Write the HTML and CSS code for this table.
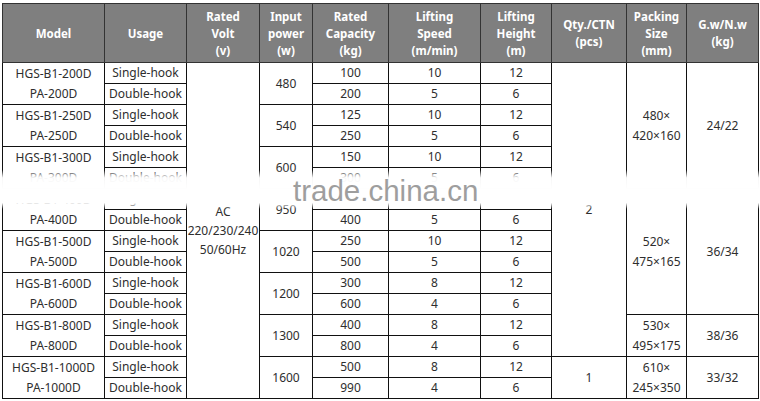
FILE: index.html
```html
<!DOCTYPE html>
<html>
<head>
<meta charset="utf-8">
<link rel="stylesheet" href="styles.css">
</head>
<body>
<div class="sheet">
<table class="spec">
<colgroup>
<col class="c-model"><col class="c-usage"><col class="c-volt"><col class="c-power"><col class="c-cap"><col class="c-speed"><col class="c-height"><col class="c-qty"><col class="c-pack"><col class="c-gw">
</colgroup>
<thead>
<tr class="head">
<th>Model</th><th>Usage</th><th>Rated<br>Volt<br>(v)</th><th>Input<br>power<br>(w)</th><th>Rated<br>Capacity<br>(kg)</th><th>Lifting<br>Speed<br>(m/min)</th><th>Lifting<br>Height<br>(m)</th><th>Qty./CTN<br>(pcs)</th><th>Packing<br>Size<br>(mm)</th><th>G.w/N.w<br>(kg)</th>
</tr>
</thead>
<tbody>
<tr><td rowspan="2" class="model">HGS-B1-200D<br>PA-200D</td><td>Single-hook</td><td rowspan="16" class="volt">AC<br>220/230/240<br>50/60Hz</td><td rowspan="2">480</td><td>100</td><td>10</td><td>12</td><td rowspan="14">2</td><td rowspan="6" class="pack">480×<br>420×160</td><td rowspan="6">24/22</td></tr>
<tr><td>Double-hook</td><td>200</td><td>5</td><td>6</td></tr>
<tr><td rowspan="2" class="model">HGS-B1-250D<br>PA-250D</td><td>Single-hook</td><td rowspan="2">540</td><td>125</td><td>10</td><td>12</td></tr>
<tr><td>Double-hook</td><td>250</td><td>5</td><td>6</td></tr>
<tr><td rowspan="2" class="model">HGS-B1-300D<br>PA-300D</td><td>Single-hook</td><td rowspan="2">600</td><td>150</td><td>10</td><td>12</td></tr>
<tr><td>Double-hook</td><td>300</td><td>5</td><td>6</td></tr>
<tr><td rowspan="2" class="model">HGS-B1-400D<br>PA-400D</td><td>Single-hook</td><td rowspan="2">950</td><td>200</td><td>10</td><td>12</td><td rowspan="6" class="pack">520×<br>475×165</td><td rowspan="6">36/34</td></tr>
<tr><td>Double-hook</td><td>400</td><td>5</td><td>6</td></tr>
<tr><td rowspan="2" class="model">HGS-B1-500D<br>PA-500D</td><td>Single-hook</td><td rowspan="2">1020</td><td>250</td><td>10</td><td>12</td></tr>
<tr><td>Double-hook</td><td>500</td><td>5</td><td>6</td></tr>
<tr><td rowspan="2" class="model">HGS-B1-600D<br>PA-600D</td><td>Single-hook</td><td rowspan="2">1200</td><td>300</td><td>8</td><td>12</td></tr>
<tr><td>Double-hook</td><td>600</td><td>4</td><td>6</td></tr>
<tr><td rowspan="2" class="model">HGS-B1-800D<br>PA-800D</td><td>Single-hook</td><td rowspan="2">1300</td><td>400</td><td>8</td><td>12</td><td rowspan="2" class="pack">530×<br>495×175</td><td rowspan="2">38/36</td></tr>
<tr><td>Double-hook</td><td>800</td><td>4</td><td>6</td></tr>
<tr><td rowspan="2" class="model">HGS-B1-1000D<br>PA-1000D</td><td>Single-hook</td><td rowspan="2">1600</td><td>500</td><td>8</td><td>12</td><td rowspan="2">1</td><td rowspan="2" class="pack">610×<br>245×350</td><td rowspan="2">33/32</td></tr>
<tr><td>Double-hook</td><td>990</td><td>4</td><td>6</td></tr>
</tbody>
</table>
<div class="band"></div>
<div class="watermark">trade.china.cn</div>
</div>
</body>
</html>
```

FILE: styles.css
```css
html, body {
  margin: 0;
  padding: 0;
  background: #ffffff;
}
.sheet {
  position: relative;
  padding: 3px 0 0 2px;
  width: 758px;
}
.spec {
  border-collapse: collapse;
  table-layout: fixed;
  width: 757px;
  font-family: "Noto Sans", "Open Sans", "DejaVu Sans", sans-serif;
  font-size: 12px;
  color: #2e2e2e;
}
.c-model { width: 102px; }
.c-usage { width: 82px; }
.c-volt { width: 73px; }
.c-power { width: 53px; }
.c-cap { width: 76px; }
.c-speed { width: 92px; }
.c-height { width: 71px; }
.c-qty { width: 75px; }
.c-pack { width: 60px; }
.c-gw { width: 72px; }
.spec th, .spec td {
  border: 1px solid #111;
  padding: 0;
  text-align: center;
  vertical-align: middle;
  white-space: nowrap;
  overflow: hidden;
}
.head {
  height: 59px;
}
.spec th {
  background: #7f7f7f;
  color: #ffffff;
  font-weight: bold;
  font-size: 11.5px;
  line-height: 17px;
  border-color: #333;
}
.spec tbody tr {
  height: 21px;
}
.spec td {
  line-height: 16px;
}
.spec td.model {
  line-height: 20px;
}
.spec td.volt {
  line-height: 19px;
}
.spec td.pack {
  line-height: 20px;
}
.band {
  position: absolute;
  left: 0;
  right: 0;
  top: 170px;
  height: 39px;
  background: linear-gradient(to bottom, rgba(255,255,255,0) 0%, rgba(255,255,255,0.96) 20%, #ffffff 50%, #ffffff 84%, rgba(255,255,255,0) 100%);
}
.watermark {
  position: absolute;
  left: 293px;
  top: 176px;
  font-family: "Liberation Sans", Arial, sans-serif;
  font-size: 29.5px;
  line-height: 29px;
  color: #9e9e9e;
}
```
